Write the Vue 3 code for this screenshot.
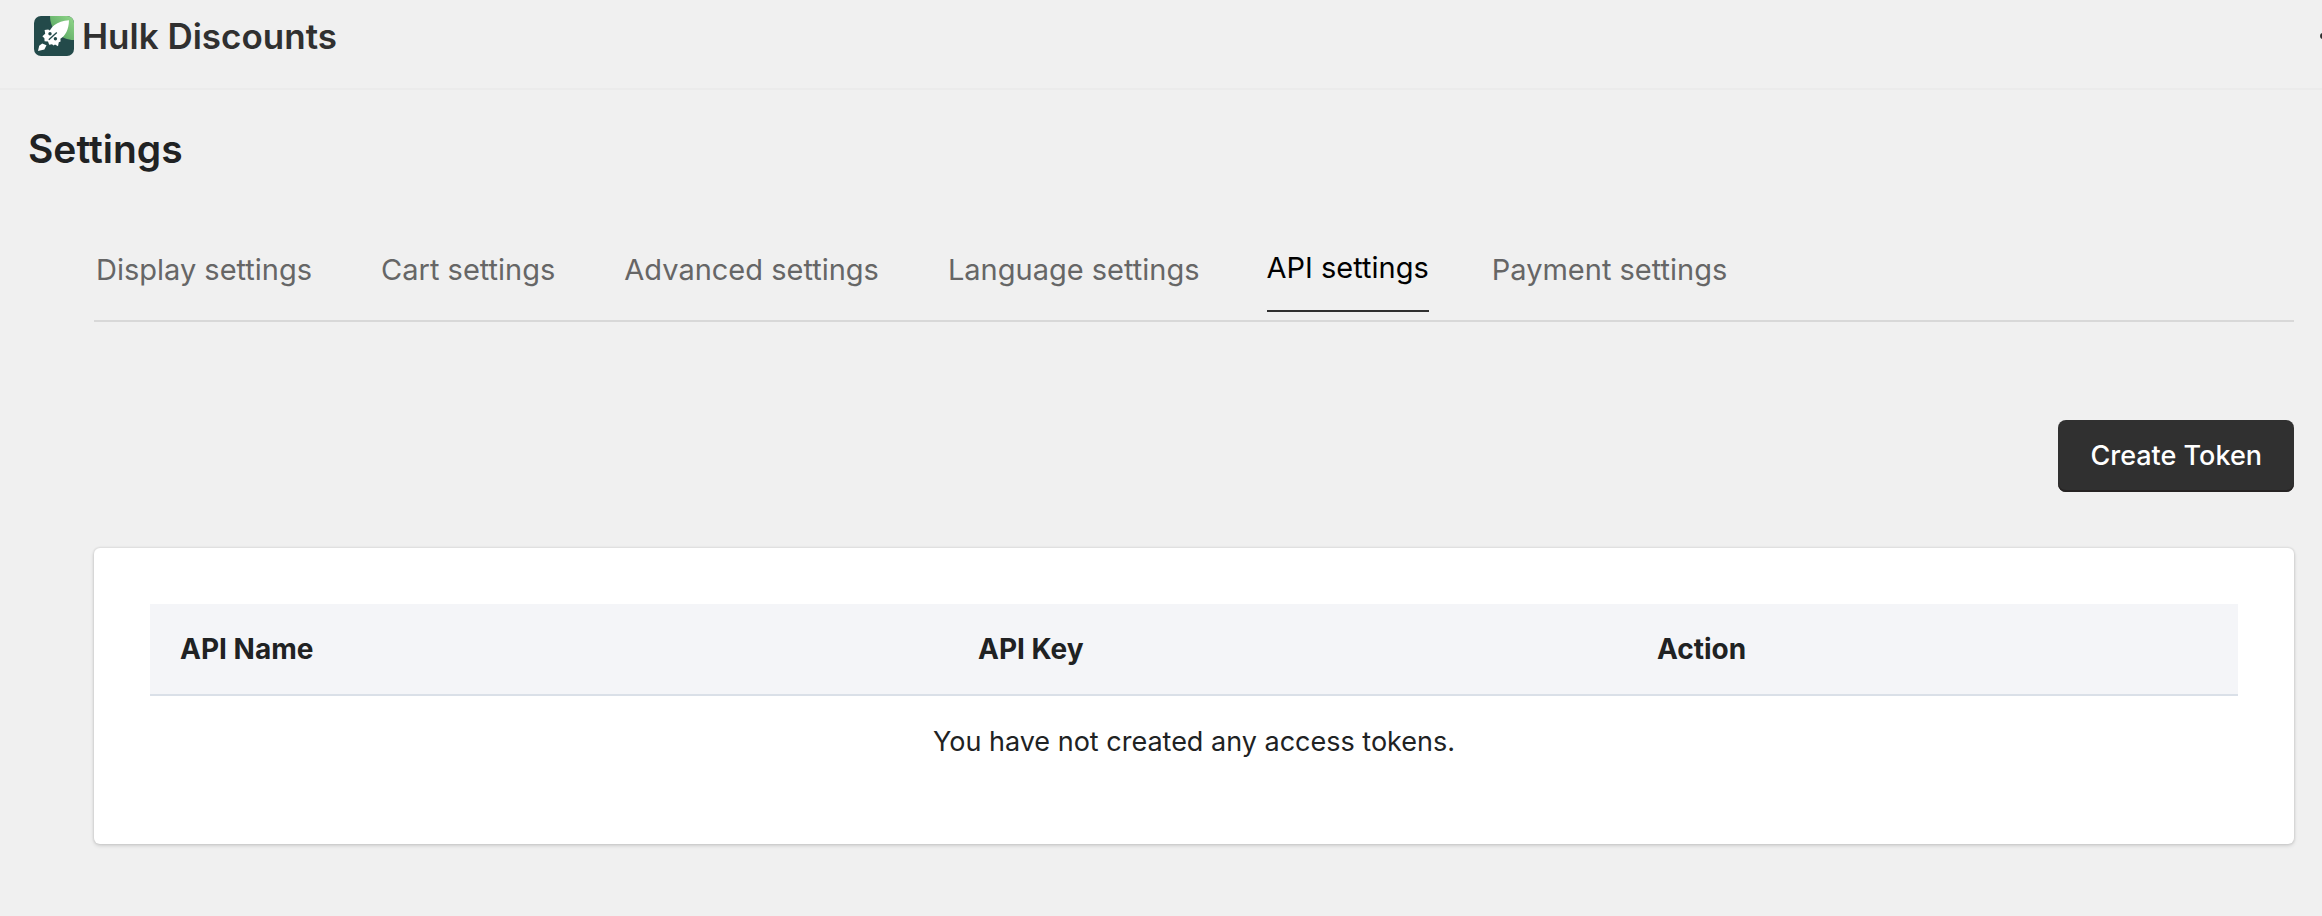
<template>
  <div class="app-shell">
    <header class="app-header">
      <svg class="app-logo" viewBox="0 0 40 40" aria-hidden="true">
        <defs>
          <linearGradient id="logo-glow" x1="1" y1="0" x2="0" y2="1">
            <stop offset="0" stop-color="#93d88b" />
            <stop offset="1" stop-color="#4a9a58" />
          </linearGradient>
          <clipPath id="logo-clip">
            <rect width="40" height="40" rx="7" />
          </clipPath>
        </defs>
        <g clip-path="url(#logo-clip)">
          <rect width="40" height="40" fill="#234a4a" />
          <path d="M16 0H40V24C27 24 16 14 16 0Z" fill="url(#logo-glow)" />
        </g>
        <path
          d="M35 4.2C29 4.6 24 6.2 20.5 9C18.3 10.8 16.8 12.6 15.8 14.6L14.2 13.6L10.6 14L11.2 17.8L8.4 20.2L10.4 22.2L10.6 25.2L14 25.6L15.2 28.8L18 28.2L19.6 29.6L21 28.4L24 30.2L24.8 26.2L26.6 25.4L26.4 22.8C31.4 19.5 34.8 14 35 4.2Z"
          fill="#fff"
        />
        <path d="M8.2 27.4L12.5 29.2L10.4 33.6L4 35L5.2 29.8Z" fill="#fff" />
        <circle cx="16" cy="17.8" r="1.7" fill="#234a4a" />
        <circle cx="21.4" cy="22.8" r="1.7" fill="#234a4a" />
        <path d="M22.8 16.4L14.8 23.8" stroke="#234a4a" stroke-width="1.4" />
      </svg>
      <span class="app-name">Hulk Discounts</span>
      <button class="more-btn" type="button" aria-label="More actions">
        <svg class="more-icon" viewBox="0 0 26 6" aria-hidden="true">
          <circle cx="3" cy="3" r="3" />
          <circle cx="13" cy="3" r="3" />
          <circle cx="23" cy="3" r="3" />
        </svg>
      </button>
    </header>

    <main>
      <h1 class="page-title">Settings</h1>

      <div class="page-body">
        <nav class="tabs">
          <a
            v-for="tab in tabs"
            :key="tab"
            href="#"
            class="tab"
            :class="{ active: tab === activeTab }"
            @click.prevent="activeTab = tab"
          >{{ tab }}</a>
        </nav>

        <div class="toolbar">
          <button class="create-btn" type="button">Create Token</button>
        </div>

        <section class="card">
          <table class="token-table">
            <thead>
              <tr>
                <th class="col-name" scope="col">API Name</th>
                <th class="col-key" scope="col">API Key</th>
                <th scope="col">Action</th>
              </tr>
            </thead>
            <tbody>
              <tr>
                <td class="empty" colspan="3">You have not created any access tokens.</td>
              </tr>
            </tbody>
          </table>
        </section>
      </div>
    </main>
  </div>
</template>

<script setup>
import { ref } from 'vue';

const tabs = [
  'Display settings',
  'Cart settings',
  'Advanced settings',
  'Language settings',
  'API settings',
  'Payment settings'
];

const activeTab = ref('API settings');
</script>

<style>
body {
  margin: 0;
  background: #f0f0f0;
}
</style>

<style scoped>
.app-shell {
  font-family: Inter, "Liberation Sans", sans-serif;
  font-size: 27px;
  line-height: 40px;
  color: #202223;
}

.app-header {
  display: flex;
  align-items: center;
  gap: 8px;
  padding: 12px 0 28px 34px;
  border-bottom: 2px solid #ebebeb;
  overflow: hidden;
}

.app-logo {
  flex: none;
  width: 40px;
  height: 40px;
}

.app-name {
  font-size: 35px;
  font-weight: 600;
  line-height: 48px;
  color: #303030;
}

.more-btn {
  display: flex;
  width: 2px;
  margin-left: auto;
  padding: 0;
  border: 0;
  background: none;
  cursor: pointer;
}

.more-icon {
  flex: none;
  width: 26px;
  height: 6px;
  fill: #303030;
}

.page-title {
  margin: 0;
  padding: 35px 28px 0;
  font-size: 39px;
  font-weight: 600;
  line-height: 48px;
}

.page-body {
  padding: 0 28px 28px 94px;
}

.tabs {
  display: flex;
  align-items: flex-start;
  gap: 65px;
  margin-top: 75px;
  padding-bottom: 8px;
  border-bottom: 2px solid #d8d8d8;
}

.tab {
  padding: 2px 2px 20px;
  color: #666;
  font-size: 29px;
  text-decoration: none;
}

.tab.active {
  margin-right: -4px;
  padding: 0 0 22px;
  border-bottom: 2px solid #303030;
  color: #000;
}

.toolbar {
  display: flex;
  justify-content: flex-end;
  margin: 98px 0 56px;
}

.create-btn {
  padding: 16px 32px;
  border: 0;
  border-radius: 8px;
  background: #303030;
  box-shadow: inset 0 -2px 0 #262323;
  color: #fff;
  font: inherit;
  font-weight: 500;
  cursor: pointer;
}

.card {
  padding: 56px;
  border-radius: 6px;
  background: #fff;
  box-shadow: 0 0 2px 1px rgba(0, 0, 0, 0.08), 0 2px 4px rgba(0, 0, 0, 0.12);
}

.token-table {
  width: 100%;
  border-collapse: separate;
  border-spacing: 0;
  table-layout: fixed;
}

.token-table th {
  padding: 25px 30px;
  border-bottom: 2px solid #dae0e8;
  background: #f4f5f8;
  font-size: 28px;
  font-weight: 700;
  text-align: left;
}

.col-name {
  width: 738px;
}

.col-key {
  width: 619px;
}

.token-table .empty {
  padding: 26px 30px;
  text-align: center;
}
</style>
